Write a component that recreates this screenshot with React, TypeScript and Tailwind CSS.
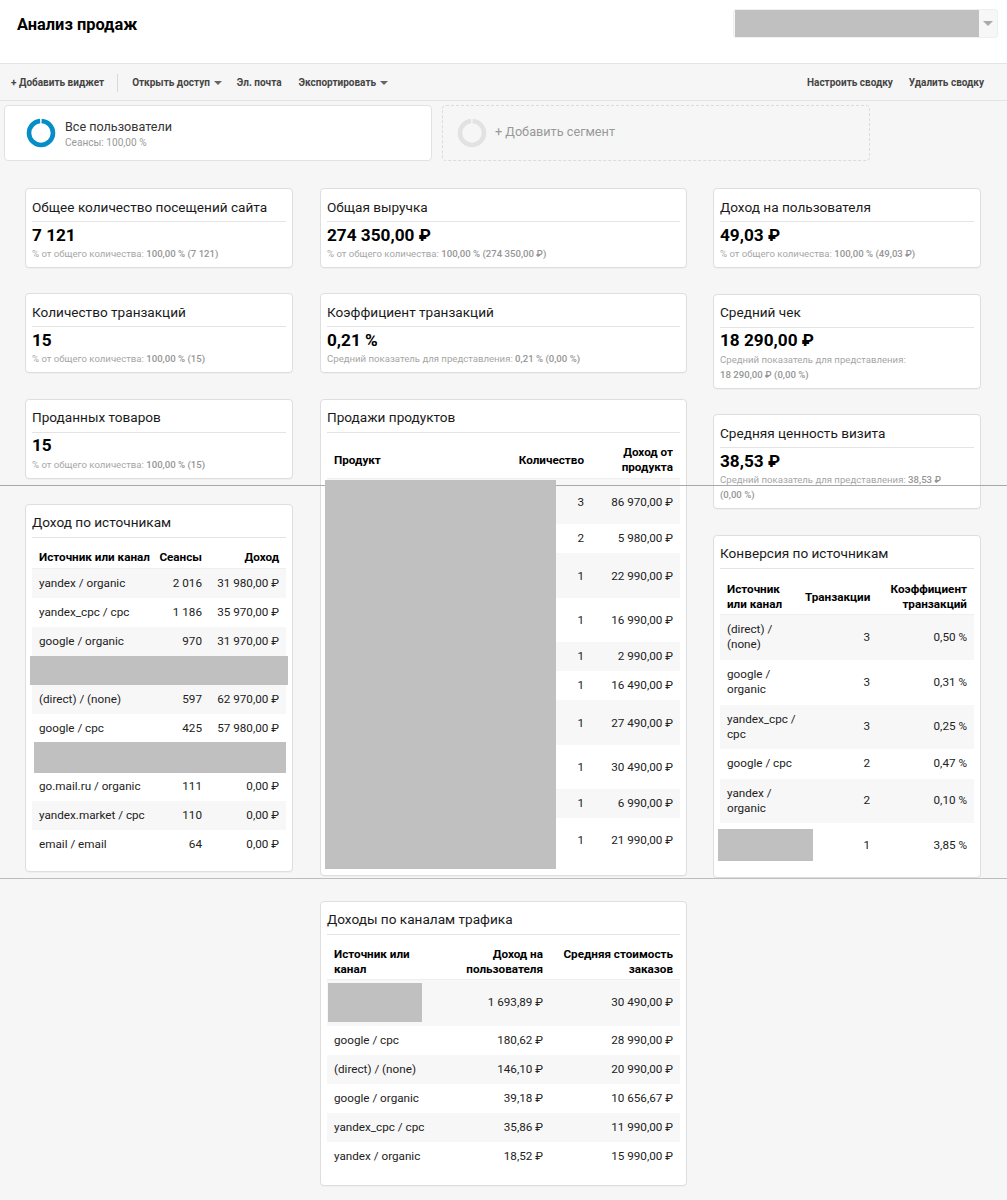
import React from "react";

const font = { fontFamily: 'Roboto, "Liberation Sans", sans-serif' };

function Card({ title, children, className = "" }: { title: string; children: React.ReactNode; className?: string }) {
  return (
    <div className={"rounded-[4px] border border-[#dedede] bg-white px-[6px] shadow-[0_1px_1px_rgba(0,0,0,0.03)] " + className}>
      <div className="h-[33px] border-b border-[#e4e4e4] pt-[7.5px] text-[13.6px] leading-[20px] text-[#1a1a1a]">{title}</div>
      {children}
    </div>
  );
}

function Metric({ title, value, sub }: { title: string; value: string; sub: React.ReactNode }) {
  return (
    <Card title={title} className="pb-[6px]">
      <div className="mt-[1.5px] text-[17.2px] font-bold leading-[22px] text-black">{value}</div>
      <div className="mt-[0.5px] text-[9.6px] leading-[15px] text-[#a6a6a6]">{sub}</div>
    </Card>
  );
}

const B = ({ children }: { children: React.ReactNode }) => <b className="font-medium text-[#959595]">{children}</b>;

function Head({ children, h }: { children: React.ReactNode; h: string }) {
  return <div className={"flex items-center border-b border-[#efefef] text-[11.7px] font-bold leading-[15px] text-black " + h}>{children}</div>;
}

function Row({ i, children, h = "h-[29px]" }: { i: number; children: React.ReactNode; h?: string }) {
  return (
    <div className={"flex items-center text-[11.7px] leading-[15px] text-[#222] " + h + " " + (i % 2 === 0 ? "bg-[#f7f7f7]" : "bg-white")}>
      {children}
    </div>
  );
}

const sources: (string[] | null)[] = [
  ["yandex / organic", "2 016", "31 980,00 ₽"],
  ["yandex_cpc / cpc", "1 186", "35 970,00 ₽"],
  ["google / organic", "970", "31 970,00 ₽"],
  null,
  ["(direct) / (none)", "597", "62 970,00 ₽"],
  ["google / cpc", "425", "57 980,00 ₽"],
  null,
  ["go.mail.ru / organic", "111", "0,00 ₽"],
  ["yandex.market / cpc", "110", "0,00 ₽"],
  ["email / email", "64", "0,00 ₽"],
];

const products: [string, string, string][] = [
  ["3", "86 970,00 ₽", "h-[45px] pt-[2px]"],
  ["2", "5 980,00 ₽", "h-[29px]"],
  ["1", "22 990,00 ₽", "h-[45px] pt-[2px]"],
  ["1", "16 990,00 ₽", "h-[44px] pt-[2px]"],
  ["1", "2 990,00 ₽", "h-[29px]"],
  ["1", "16 490,00 ₽", "h-[29px]"],
  ["1", "27 490,00 ₽", "h-[45px] pt-[2px]"],
  ["1", "30 490,00 ₽", "h-[44px] pt-[2px]"],
  ["1", "6 990,00 ₽", "h-[29px]"],
  ["1", "21 990,00 ₽", "h-[44px] pt-[2px]"],
];

const conversions: [string, string, string, string][] = [
  ["(direct) / (none)", "3", "0,50 %", "h-[45px]"],
  ["google / organic", "3", "0,31 %", "h-[45px]"],
  ["yandex_cpc / cpc", "3", "0,25 %", "h-[44px]"],
  ["google / cpc", "2", "0,47 %", "h-[30px]"],
  ["yandex / organic", "2", "0,10 %", "h-[44px]"],
];

const channels: string[][] = [
  ["google / cpc", "180,62 ₽", "28 990,00 ₽"],
  ["(direct) / (none)", "146,10 ₽", "20 990,00 ₽"],
  ["google / organic", "39,18 ₽", "10 656,67 ₽"],
  ["yandex_cpc / cpc", "35,86 ₽", "11 990,00 ₽"],
  ["yandex / organic", "18,52 ₽", "15 990,00 ₽"],
];

function Donut({ color }: { color: string }) {
  return (
    <svg width="30" height="30" viewBox="0 0 30 30" className="shrink-0">
      <circle cx="15" cy="15" r="12" fill="none" stroke={color} strokeWidth="4.6" strokeDasharray="73.4 2" strokeDashoffset="-0.6" transform="rotate(-90 15 15)" />
    </svg>
  );
}

const Caret = () => <span className="ml-[4px] inline-block h-0 w-0 border-x-[4px] border-t-[4px] border-x-transparent border-t-[#666] align-middle" />;

export default function App() {
  return (
    <div style={font} className="relative min-h-[1200px] overflow-hidden bg-[#f6f6f6]">
      <header className="flex h-[63px] items-start justify-between bg-white pl-[17px] pr-[9px] pt-[9px]">
        <h1 className="mt-[5px] text-[16.4px] font-bold leading-[22px] text-black">Анализ продаж</h1>
        <div className="flex h-[29px] w-[265px] rounded-[3px] border border-[#efefef] bg-[#f7f7f7] pl-px">
          <div className="h-full w-[244px] bg-[#c0c0c0]" />
          <div className="flex flex-1 items-center justify-center">
            <span className="h-0 w-0 border-x-[5px] border-t-[5px] border-x-transparent border-t-[#aaa]" />
          </div>
        </div>
      </header>

      <nav className="flex h-[38px] items-center justify-between border-y border-[#e4e4e4] pl-[11px] pr-[23px] pt-[1px] text-[10px] font-bold text-[#444]">
        <div className="flex items-center">
          <span>+ Добавить виджет</span>
          <span className="ml-[13px] mr-[14px] h-[18px] w-px bg-[#d8d8d8]" />
          <span>Открыть доступ<Caret /></span>
          <span className="ml-[15px]">Эл. почта</span>
          <span className="ml-[17px]">Экспортировать<Caret /></span>
        </div>
        <div className="flex items-center gap-[16px]">
          <span>Настроить сводку</span>
          <span>Удалить сводку</span>
        </div>
      </nav>

      <section className="mt-[4px] flex gap-[10px] pl-[4px]">
        <div className="flex h-[56px] w-[428px] items-center rounded-[4px] border border-[#e2e2e2] bg-white pl-[21px]">
          <Donut color="#058dc7" />
          <div className="ml-[9px] mt-[3px]">
            <div className="text-[12.6px] leading-[16px] text-[#333]">Все пользователи</div>
            <div className="mt-[1px] text-[10.1px] leading-[14px] text-[#999]">Сеансы: 100,00 %</div>
          </div>
        </div>
        <div className="flex h-[56px] w-[428px] items-center rounded-[4px] border border-dashed border-[#dcdcdc] pl-[14px]">
          <Donut color="#e2e2e2" />
          <div className="-mt-[3px] ml-[8px] text-[12.7px] text-[#999]">+ Добавить сегмент</div>
        </div>
      </section>

      <main className="mt-[27px] flex items-start pl-[25px]">
        <div className="flex w-[268px] flex-col gap-[25.25px]">
          <Metric title="Общее количество посещений сайта" value="7 121" sub={<>% от общего количества: <B>100,00 % (7 121)</B></>} />
          <Metric title="Количество транзакций" value="15" sub={<>% от общего количества: <B>100,00 % (15)</B></>} />
          <Metric title="Проданных товаров" value="15" sub={<>% от общего количества: <B>100,00 % (15)</B></>} />
          <Card title="Доход по источникам" className="pb-[11.5px]">
            <Head h="h-[31.5px] pt-[8px]">
              <span className="w-[125px] pl-[7px] whitespace-nowrap">Источник или канал</span>
              <span className="w-[45px] text-right">Сеансы</span>
              <span className="flex-1 pr-[7px] text-right">Доход</span>
            </Head>
            {sources.map((r, i) =>
              r ? (
                <Row key={i} i={i}>
                  <span className="w-[125px] pl-[7px] whitespace-nowrap">{r[0]}</span>
                  <span className="w-[45px] text-right">{r[1]}</span>
                  <span className="flex-1 pr-[7px] text-right">{r[2]}</span>
                </Row>
              ) : i === 3 ? (
                <div key={i} className="relative z-10 -mx-[2px] h-[29px] bg-[#c0c0c0]" />
              ) : (
                <div key={i} className="relative z-10 -my-[1px] ml-[2px] h-[31px] bg-[#c0c0c0]" />
              )
            )}
          </Card>
        </div>

        <div className="ml-[27px] flex w-[367px] flex-col gap-[25.25px]">
          <Metric title="Общая выручка" value="274 350,00 ₽" sub={<>% от общего количества: <B>100,00 % (274 350,00 ₽)</B></>} />
          <Metric title="Коэффициент транзакций" value="0,21 %" sub={<>Средний показатель для представления: <B>0,21 % (0,00 %)</B></>} />
          <Card title="Продажи продуктов" className="pb-[13px]">
            <div className="relative">
              <Head h="h-[46px] pt-[10px]">
                <span className="w-[7px]" />
                <span className="flex-1">Продукт</span>
                <span className="w-[80px] text-right">Количество</span>
                <span className="w-[96px] pl-[20px] pr-[7px] text-right">Доход от продукта</span>
              </Head>
              {products.map((p, i) => (
                <Row key={i} i={i} h={p[2]}>
                  <span className="flex-1" />
                  <span className="w-[80px] text-right">{p[0]}</span>
                  <span className="w-[96px] pr-[7px] text-right">{p[1]}</span>
                </Row>
              ))}
              <div className="absolute left-[-2px] top-[47px] z-10 h-[389px] w-[231px] bg-[#c0c0c0]" />
            </div>
          </Card>
          <Card title="Доходы по каналам трафика" className="pb-[14px]">
            <Head h="h-[45px] pt-[10px]">
              <span className="w-[98px] pl-[7px]">Источник или канал</span>
              <span className="w-[118px] text-right">Доход на пользователя</span>
              <span className="flex-1 pl-[10px] pr-[7px] text-right">Средняя стоимость заказов</span>
            </Head>
            <Row i={0} h="h-[46px]">
              <span className="w-[98px] pl-px">
                <span className="block h-[39px] w-[94px] bg-[#c0c0c0]" />
              </span>
              <span className="w-[118px] text-right">1 693,89 ₽</span>
              <span className="flex-1 pr-[7px] text-right">30 490,00 ₽</span>
            </Row>
            {channels.map((r, i) => (
              <Row key={i} i={i + 1}>
                <span className="w-[98px] pl-[7px] whitespace-nowrap">{r[0]}</span>
                <span className="w-[118px] text-right">{r[1]}</span>
                <span className="flex-1 pr-[7px] text-right">{r[2]}</span>
              </Row>
            ))}
          </Card>
        </div>

        <div className="ml-[26px] flex w-[268px] flex-col gap-[25.5px]">
          <Metric title="Доход на пользователя" value="49,03 ₽" sub={<>% от общего количества: <B>100,00 % (49,03 ₽)</B></>} />
          <Metric title="Средний чек" value="18 290,00 ₽" sub={<>Средний показатель для представления: <B>{"18\u00a0290,00\u00a0₽\u00a0(0,00\u00a0%)"}</B></>} />
          <Metric title="Средняя ценность визита" value="38,53 ₽" sub={<>Средний показатель для представления: <B>38,53{"\u00a0"}₽</B> <B>{"(0,00\u00a0%)"}</B></>} />
          <Card title="Конверсия по источникам" className="pb-[9px]">
            <Head h="h-[46px] pt-[12px]">
              <span className="w-[85px] pl-[7px] pr-[12px]">Источник или канал</span>
              <span className="w-[65px] text-right">Транзакции</span>
              <span className="flex-1 pr-[7px] text-right">Коэффициент транзакций</span>
            </Head>
            {conversions.map((r, i) => (
              <Row key={i} i={i} h={r[3]}>
                <span className="w-[85px] pl-[7px] pr-[8px]">{r[0]}</span>
                <span className="w-[65px] text-right">{r[1]}</span>
                <span className="flex-1 pr-[7px] text-right">{r[2]}</span>
              </Row>
            ))}
            <Row i={5} h="h-[45px]">
              <span className="w-[85px]">
                <span className="relative z-10 -ml-[2px] block h-[32px] w-[95px] bg-[#c0c0c0]" />
              </span>
              <span className="w-[65px] text-right">1</span>
              <span className="flex-1 pr-[7px] text-right">3,85 %</span>
            </Row>
          </Card>
        </div>
      </main>

      <div className="absolute inset-x-0 top-[485px] h-px bg-[#a8a8a8]" />
      <div className="absolute inset-x-0 top-[877.5px] h-[1.5px] bg-[#bdbdbd]" />
    </div>
  );
}
